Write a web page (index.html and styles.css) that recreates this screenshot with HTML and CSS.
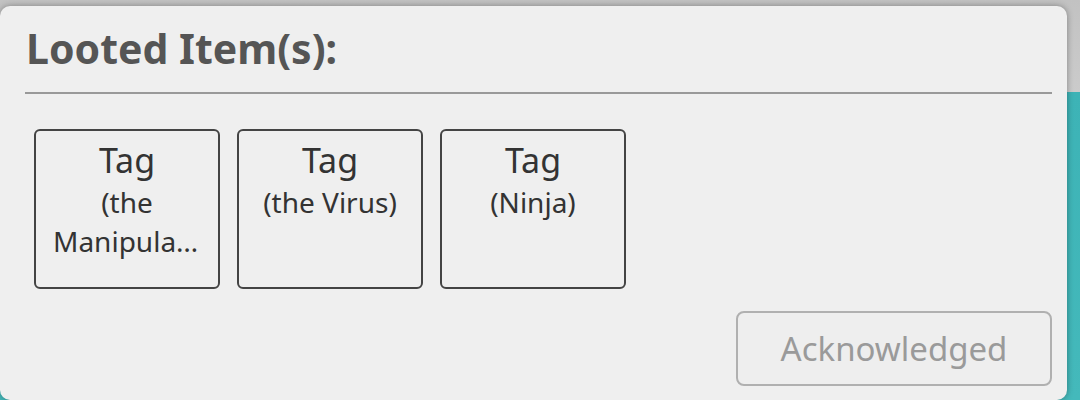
FILE: index.html
```html
<!DOCTYPE html>
<html lang="en">
<head>
    <meta charset="UTF-8">
    <title>Looted Items</title>
    <link rel="stylesheet" href="styles.css">
</head>
<body>
    <div class="dialog">
        <h1 class="dialog-title">Looted Item(s):</h1>

        <div class="loot-list">
            <div class="loot-card">
                <div class="loot-name">Tag</div>
                <div class="loot-owner">(the Manipulator)</div>
            </div>
            <div class="loot-card">
                <div class="loot-name">Tag</div>
                <div class="loot-owner">(the Virus)</div>
            </div>
            <div class="loot-card">
                <div class="loot-name">Tag</div>
                <div class="loot-owner">(Ninja)</div>
            </div>
        </div>

        <div class="dialog-actions">
            <button class="ack-btn" disabled>Acknowledged</button>
        </div>
    </div>
</body>
</html>
```

FILE: styles.css
```css
* {
    margin: 0;
    padding: 0;
    box-sizing: border-box;
}

body {
    width: 1080px;
    height: 400px;
    overflow: hidden;
    padding-top: 6px;
    font-family: "Noto Sans", "Open Sans", sans-serif;
    background: linear-gradient(to bottom, #c2c2c2 0, #cbcbcb 92px, #3db3b6 92px, #44b9bb 100%);
}

.dialog {
    width: 1067px;
    height: 394px;
    background: #efefef;
    border-radius: 10px;
    box-shadow: 0 0 6px rgba(0, 0, 0, 0.35);
    padding: 0 15px 0 25px;
}

.dialog-title {
    font-size: 41px;
    font-weight: 700;
    color: #555;
    line-height: 1;
    padding: 22px 0 0 1px;
    height: 88px;
    border-bottom: 2px solid #999;
}

.loot-list {
    display: flex;
    gap: 17px;
    padding: 35px 0 0 9px;
}

.loot-card {
    width: 186px;
    height: 160px;
    border: 2px solid #444;
    border-radius: 6px;
    text-align: center;
    color: #333;
    padding: 6px 17px 0;
}

.loot-name {
    font-size: 34px;
    line-height: 46px;
}

.loot-owner {
    font-size: 28px;
    line-height: 39px;
    max-height: 78px;
    overflow: hidden;
    text-overflow: ellipsis;
}

.dialog-actions {
    display: flex;
    justify-content: flex-end;
    padding-top: 22px;
}

.ack-btn {
    width: 316px;
    height: 75px;
    border: 2px solid #b0b0b0;
    border-radius: 8px;
    background: #eeeeee;
    color: #9a9a9a;
    font-family: inherit;
    font-size: 33px;
}
```
